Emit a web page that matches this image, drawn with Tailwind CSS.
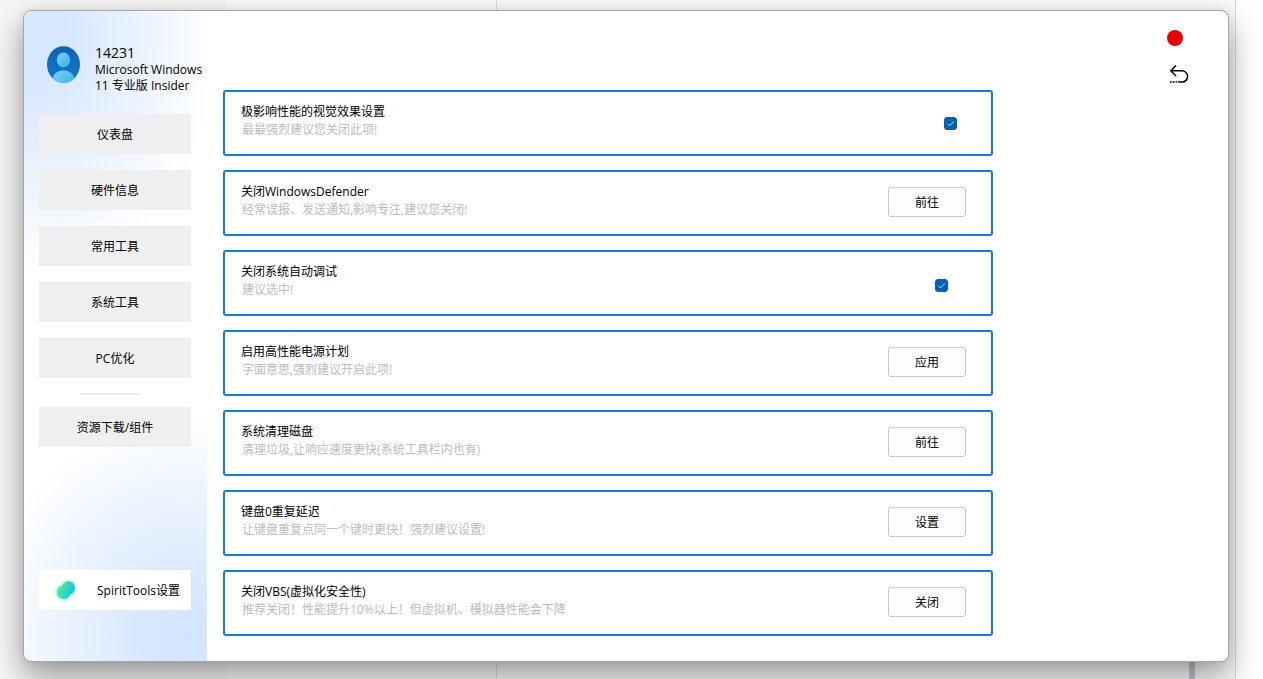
<!DOCTYPE html>
<html lang="zh-CN">
<head>
<meta charset="utf-8">
<meta name="viewport" content="width=device-width, initial-scale=1">
<title>SpiritTools</title>
<script src="https://cdn.jsdelivr.net/npm/@tailwindcss/browser@4"></script>
</head>
<body class="bg-[#f7f7f7] font-['Open_Sans','Noto_Sans_CJK_SC',sans-serif] text-xs text-black">
<div class="relative isolate flex min-h-screen overflow-hidden pt-[10px] pr-[34px] pb-[17px] pl-[23px]">

  <!-- Desktop content behind the window -->
  <div class="absolute inset-0 -z-10 flex" aria-hidden="true">
    <div class="w-[226px] bg-[#f6f6f6]"></div>
    <div class="w-[271px] border-r border-[#dedede] bg-[#fafafa]"></div>
    <div class="flex flex-1 items-end justify-end border-r border-[#d8d8d8] bg-[#fafafa] pr-[40px]"><div class="h-[18px] w-[6px] bg-[#c4c4cc]"></div></div>
    <div class="w-[27px] bg-white"></div>
  </div>

  <div class="flex flex-1 overflow-hidden rounded-lg border border-[#a6a6a6] bg-white shadow-[0_14px_32px_rgba(0,0,0,0.4),0_0_10px_rgba(0,0,0,0.06)]">
    <aside class="flex w-[183px] shrink-0 flex-col bg-[radial-gradient(ellipse_180px_240px_at_8%_4%,#d6e7fe_0%,#d6e7fe_15%,#ffffff00_100%),radial-gradient(ellipse_210px_220px_at_90%_96%,#d3e5fe_0%,#d6e7fe_20%,#ffffff00_100%)] pr-4 pb-[51px] pl-[15px]">
      <div class="flex pt-8 pl-2">
        <svg class="mt-[2px] h-[38px] w-[34px] shrink-0" viewBox="0 0 34 38" role="img" aria-label="用户头像">
          <defs>
            <linearGradient id="avatarBg" x1="0" y1="0" x2="0" y2="1"><stop stop-color="#0f62b3"/><stop offset="1" stop-color="#0d7bd0"/></linearGradient>
            <linearGradient id="avatarFg" x1="0" y1="0" x2="1" y2="1"><stop stop-color="#7cd5fb"/><stop offset="1" stop-color="#35abe8"/></linearGradient>
            <clipPath id="avatarClip"><ellipse cx="16.500" cy="19.500" rx="16.500" ry="18.300"/></clipPath>
          </defs>
          <g clip-path="url(#avatarClip)">
            <rect width="34" height="38" fill="url(#avatarBg)"/>
            <ellipse cx="16.500" cy="35" rx="11" ry="9.800" fill="url(#avatarFg)"/>
            <ellipse cx="16.500" cy="15" rx="7.500" ry="8.200" fill="#0c68bb"/>
            <ellipse cx="16.500" cy="15" rx="6.700" ry="7.400" fill="url(#avatarFg)"/>
          </g>
        </svg>
        <div class="ml-[14px] whitespace-nowrap leading-4">
          <p class="text-sm leading-[19px]">14231</p>
          <p>Microsoft Windows<br>11 专业版 Insider</p>
        </div>
      </div>
      <nav class="mt-5 flex flex-col gap-4">
        <button class="h-10 bg-[#efefef] pt-[2px]">仪表盘</button>
        <button class="h-10 bg-[#efefef] pt-[2px]">硬件信息</button>
        <button class="h-10 bg-[#efefef] pt-[2px]">常用工具</button>
        <button class="h-10 bg-[#efefef] pt-[2px]">系统工具</button>
        <button class="h-10 bg-[#efefef] pt-[2px]">PC优化</button>
      </nav>
      <hr class="mt-[15px] ml-[41px] w-[60px] border-t-2 border-[#eeeeee]">
      <button class="mt-3 h-10 bg-[#efefef] pt-[2px]">资源下载/组件</button>
      <button class="mt-auto flex h-10 items-center justify-between bg-white pt-[2px] pr-[11px] pl-[14px]">
        <svg class="h-7 w-7" viewBox="0 0 28 28" aria-hidden="true">
          <defs>
            <linearGradient id="dropA" x1="0" y1="0" x2="1" y2="1"><stop stop-color="#43e5a8"/><stop offset="1" stop-color="#14b9e8"/></linearGradient>
            <linearGradient id="dropB" x1="0" y1="0" x2="1" y2=".5"><stop stop-color="#72e58c"/><stop offset="1" stop-color="#14cfe0"/></linearGradient>
            <filter id="glow" x="-50%" y="-50%" width="200%" height="200%"><feGaussianBlur stdDeviation="1.500"/></filter>
          </defs>
          <g fill="#8df5c0" opacity=".85" filter="url(#glow)"><circle cx="15.500" cy="11" r="7.500"/><circle cx="10.500" cy="15.500" r="8"/></g>
          <circle cx="15.500" cy="10.800" r="6.500" fill="url(#dropA)"/>
          <circle cx="10.800" cy="15.200" r="6.700" fill="url(#dropB)"/>
        </svg>
        <span>SpiritTools设置</span>
      </button>
    </aside>

    <main class="flex flex-1 justify-between pr-[39px] pl-4">
      <div class="flex max-w-[770px] flex-1 flex-col gap-[14px] pt-[79px] pb-[25px]">
        <section class="flex h-[66px] items-start justify-between rounded-[3px] border-2 border-[#1a7bd4] pl-4 pr-[34px]">
          <label for="visual" class="pt-[11px] leading-[18px]">极影响性能的视觉效果设置<small class="block pl-px text-xs leading-[18px] text-[#bdbdbd]">最最强烈建议您关闭此项!</small></label>
          <span class="mt-[25px] grid"><input id="visual" type="checkbox" checked class="peer col-start-1 row-start-1 h-[13px] w-[13px] appearance-none rounded-[3px] border border-[#005fb8] checked:bg-[#005fb8]"><svg class="pointer-events-none invisible col-start-1 row-start-1 h-[13px] w-[13px] peer-checked:visible" viewBox="0 0 13 13" fill="none" stroke="#d8e9fa" aria-hidden="true"><path d="M3.500 6.800l2 2L9.800 4.500"/></svg></span>
        </section>
        <section class="flex h-[66px] items-start justify-between rounded-[3px] border-2 border-[#1a7bd4] pl-4 pr-[25px]">
          <div class="pt-[11px] leading-[18px]"><h2>关闭WindowsDefender</h2><p class="pl-px text-[#bdbdbd]">经常误报、发送通知,影响专注,建议您关闭!</p></div>
          <button class="mt-[15px] h-[30px] w-[78px] rounded-[3px] border border-[#c8c8c8] bg-[#fdfdfd] pt-[2px]">前往</button>
        </section>
        <section class="flex h-[66px] items-start justify-between rounded-[3px] border-2 border-[#1a7bd4] pl-4 pr-[43px]">
          <label for="debug" class="pt-[11px] leading-[18px]">关闭系统自动调试<small class="block pl-px text-xs leading-[18px] text-[#bdbdbd]">建议选中!</small></label>
          <span class="mt-[27px] grid"><input id="debug" type="checkbox" checked class="peer col-start-1 row-start-1 h-[13px] w-[13px] appearance-none rounded-[3px] border border-[#005fb8] checked:bg-[#005fb8]"><svg class="pointer-events-none invisible col-start-1 row-start-1 h-[13px] w-[13px] peer-checked:visible" viewBox="0 0 13 13" fill="none" stroke="#d8e9fa" aria-hidden="true"><path d="M3.500 6.800l2 2L9.800 4.500"/></svg></span>
        </section>
        <section class="flex h-[66px] items-start justify-between rounded-[3px] border-2 border-[#1a7bd4] pl-4 pr-[25px]">
          <div class="pt-[11px] leading-[18px]"><h2>启用高性能电源计划</h2><p class="pl-px text-[#bdbdbd]">字面意思,强烈建议开启此项!</p></div>
          <button class="mt-[15px] h-[30px] w-[78px] rounded-[3px] border border-[#c8c8c8] bg-[#fdfdfd] pt-[2px]">应用</button>
        </section>
        <section class="flex h-[66px] items-start justify-between rounded-[3px] border-2 border-[#1a7bd4] pl-4 pr-[25px]">
          <div class="pt-[11px] leading-[18px]"><h2>系统清理磁盘</h2><p class="pl-px text-[#bdbdbd]">清理垃圾,让响应速度更快(系统工具栏内也有)</p></div>
          <button class="mt-[15px] h-[30px] w-[78px] rounded-[3px] border border-[#c8c8c8] bg-[#fdfdfd] pt-[2px]">前往</button>
        </section>
        <section class="flex h-[66px] items-start justify-between rounded-[3px] border-2 border-[#1a7bd4] pl-4 pr-[25px]">
          <div class="pt-[11px] leading-[18px]"><h2>键盘0重复延迟</h2><p class="pl-px text-[#bdbdbd]">让键盘重复点同一个键时更快！强烈建议设置!</p></div>
          <button class="mt-[15px] h-[30px] w-[78px] rounded-[3px] border border-[#c8c8c8] bg-[#fdfdfd] pt-[2px]">设置</button>
        </section>
        <section class="flex h-[66px] items-start justify-between rounded-[3px] border-2 border-[#1a7bd4] pl-4 pr-[25px]">
          <div class="pt-[11px] leading-[18px]"><h2>关闭VBS(虚拟化安全性)</h2><p class="pl-px text-[#bdbdbd]">推荐关闭！性能提升10%以上！但虚拟机、模拟器性能会下降</p></div>
          <button class="mt-[15px] h-[30px] w-[78px] rounded-[3px] border border-[#c8c8c8] bg-[#fdfdfd] pt-[2px]">关闭</button>
        </section>
      </div>
      <div class="flex flex-col pt-[19px]">
        <button aria-label="关闭窗口" class="mr-[6px] h-4 w-4 self-end rounded-full bg-[#e60000]"></button>
        <button aria-label="返回" class="mt-[18px] h-5 w-[22px]"><svg class="ml-auto h-5 w-5" viewBox="0 0 20 20" fill="none" stroke="#000" stroke-width="1.500" aria-hidden="true"><path d="M7 1.500L1.800 6.800 7 12M1.800 6.800H13a5.600 5.600 0 0 1 0 11.200H9"/><path d="M1 18H8" stroke-dasharray="1.800 1"/></svg></button>
      </div>
    </main>
  </div>
</div>
</body>
</html>
